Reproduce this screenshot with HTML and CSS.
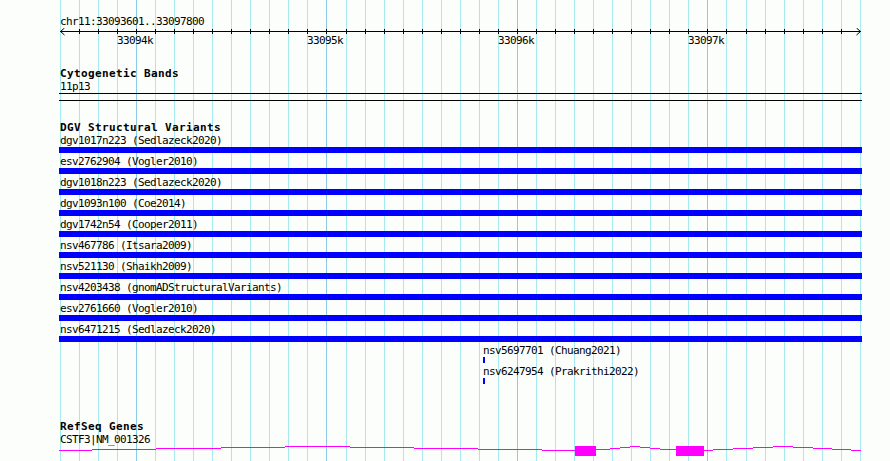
FILE: index.html
```html
<!DOCTYPE html>
<html lang="en">
<head>
  <meta charset="UTF-8">
  <title>chr11:33093601..33097800</title>
  <link rel="stylesheet" href="styles.css">
</head>
<body>
  <div class="browser">
    <!-- 100bp grid, heavier line every kb -->
    <svg class="grid" width="890" height="461" viewBox="0 0 890 461">
      <path class="grid-minor" d="M60.5 0V461M79.5 0V461M98.5 0V461M117.5 0V461M155.5 0V461M174.5 0V461M193.5 0V461M212.5 0V461M231.5 0V461M250.5 0V461M269.5 0V461M288.5 0V461M307.5 0V461M346.5 0V461M365.5 0V461M384.5 0V461M403.5 0V461M422.5 0V461M441.5 0V461M460.5 0V461M479.5 0V461M498.5 0V461M536.5 0V461M555.5 0V461M574.5 0V461M593.5 0V461M612.5 0V461M631.5 0V461M650.5 0V461M669.5 0V461M688.5 0V461M726.5 0V461M746.5 0V461M765.5 0V461M784.5 0V461M803.5 0V461M822.5 0V461M841.5 0V461M860.5 0V461"/>
      <path class="grid-major" d="M136.5 0V461M326.5 0V461M517.5 0V461M707.5 0V461"/>
    </svg>

    <div class="panel">
      <div class="ruler-title">chr11:33093601..33097800</div>
      <svg class="scale" width="802" height="20" viewBox="60 28 802 20">
        <path class="scale-line" d="M60 31.5H861"/>
        <polyline class="scale-line" points="64.5,28 60.5,31.5 64.5,35"/>
        <polyline class="scale-line" points="856.5,28 860.5,31.5 856.5,35"/>
        <path class="scale-line" d="M79.5 29V34M98.5 29V34M117.5 29V34M136.5 29V34M155.5 29V34M174.5 29V34M193.5 29V34M212.5 29V34M231.5 29V34M250.5 29V34M269.5 29V34M288.5 29V34M307.5 29V34M326.5 29V34M346.5 29V34M365.5 29V34M384.5 29V34M403.5 29V34M422.5 29V34M441.5 29V34M460.5 29V34M479.5 29V34M498.5 29V34M517.5 29V34M536.5 29V34M555.5 29V34M574.5 29V34M593.5 29V34M612.5 29V34M631.5 29V34M650.5 29V34M669.5 29V34M688.5 29V34M707.5 29V34M726.5 29V34M746.5 29V34M765.5 29V34M784.5 29V34M803.5 29V34M822.5 29V34M841.5 29V34"/>
        <text class="tick-label" x="117" y="44">33094k</text>
        <text class="tick-label" x="307" y="44">33095k</text>
        <text class="tick-label" x="498" y="44">33096k</text>
        <text class="tick-label" x="688" y="44">33097k</text>
      </svg>

      <section class="track track-cyto">
        <h2 class="track-title">Cytogenetic Bands</h2>
        <div class="label">11p13</div>
        <div class="band"></div>
      </section>

      <section class="track track-dgv">
        <h2 class="track-title">DGV Structural Variants</h2>
        <div class="feature">
          <div class="label">dgv1017n223 (Sedlazeck2020)</div>
          <div class="bar" style="margin-left:-1px;width:803px"></div>
        </div>
        <div class="feature">
          <div class="label">esv2762904 (Vogler2010)</div>
          <div class="bar" style="margin-left:-1px;width:803px"></div>
        </div>
        <div class="feature">
          <div class="label">dgv1018n223 (Sedlazeck2020)</div>
          <div class="bar" style="margin-left:-1px;width:803px"></div>
        </div>
        <div class="feature">
          <div class="label">dgv1093n100 (Coe2014)</div>
          <div class="bar" style="margin-left:-1px;width:803px"></div>
        </div>
        <div class="feature">
          <div class="label">dgv1742n54 (Cooper2011)</div>
          <div class="bar" style="margin-left:-1px;width:803px"></div>
        </div>
        <div class="feature">
          <div class="label">nsv467786 (Itsara2009)</div>
          <div class="bar" style="margin-left:-1px;width:803px"></div>
        </div>
        <div class="feature">
          <div class="label">nsv521130 (Shaikh2009)</div>
          <div class="bar" style="margin-left:-1px;width:803px"></div>
        </div>
        <div class="feature">
          <div class="label">nsv4203438 (gnomADStructuralVariants)</div>
          <div class="bar" style="margin-left:-1px;width:803px"></div>
        </div>
        <div class="feature">
          <div class="label">esv2761660 (Vogler2010)</div>
          <div class="bar" style="margin-left:-1px;width:803px"></div>
        </div>
        <div class="feature">
          <div class="label">nsv6471215 (Sedlazeck2020)</div>
          <div class="bar" style="margin-left:-1px;width:803px"></div>
        </div>
        <div class="feature" style="margin-left:423px">
          <div class="label">nsv5697701 (Chuang2021)</div>
          <div class="bar" style="width:2px"></div>
        </div>
        <div class="feature" style="margin-left:423px">
          <div class="label">nsv6247954 (Prakrithi2022)</div>
          <div class="bar" style="width:2px"></div>
        </div>
      </section>

      <section class="track track-genes">
        <h2 class="track-title">RefSeq Genes</h2>
        <div class="label">CSTF3|NM_001326</div>
        <svg class="gene" width="803" height="10" viewBox="59 446 803 10">
          <path class="intron" d="M59 450.5H92M92 449.5H156M156 448.5H221M221 447.5H285M285 446.5H350M350 447.5H414M414 448.5H478M478 449.5H542M542 450.5H575M596 449.5H610M610 448.5H620M620 447.5H630M630 446.5H640M640 447.5H650M650 448.5H660M660 449.5H676M704 450.5H713M713 449.5H733M733 448.5H753M753 447.5H773M773 446.5H793M793 447.5H813M813 448.5H832M832 449.5H851M851 450.5H861"/>
          <rect class="exon" x="575" y="446" width="21" height="10"/>
          <rect class="exon" x="676" y="446" width="28" height="10"/>
        </svg>
      </section>
    </div>
  </div>
</body>
</html>
```

FILE: styles.css
```css
* { box-sizing: border-box; }
body {
  margin: 0;
  background-color: #fbfefb;
  font-family: 'DejaVu Sans Mono', 'Liberation Mono', monospace;
  font-size: 11px;
  color: #000;
}
.browser {
  position: relative;
  width: 890px;
  height: 461px;
  overflow: hidden;
}
.grid {
  position: absolute;
  left: 0;
  top: 0;
  z-index: 0;
}
.grid-minor {
  stroke: #a6e9ef;
  stroke-width: 1;
}
.grid-major {
  stroke: #8ccbe6;
  stroke-width: 1;
}
.panel {
  position: relative;
  z-index: 1;
  margin-left: 60px;
  width: 802px;
  padding-top: 15px;
}
.ruler-title,
.label {
  height: 13px;
  line-height: 13px;
  letter-spacing: -0.62px;
  white-space: nowrap;
}
.scale {
  display: block;
}
.scale-line {
  fill: none;
  stroke: #000;
  stroke-width: 1;
}
.tick-label {
  font-family: 'DejaVu Sans Mono', 'Liberation Mono', monospace;
  font-size: 11px;
  letter-spacing: -0.62px;
  fill: #000;
}
.track-title {
  margin: 0;
  height: 12px;
  font-size: 11px;
  font-weight: bold;
  line-height: 12px;
  letter-spacing: 0.38px;
  white-space: nowrap;
}
.track-cyto { margin-top: 20px; }
.track-dgv { margin-top: 21px; }
.track-genes { margin-top: 35px; }
.band {
  margin-left: -1px;
  width: 803px;
  height: 8px;
  border-top: 1px solid #000;
  border-bottom: 1px solid #000;
}
.feature {
  padding-bottom: 2px;
}
.bar {
  height: 6px;
  background-color: #0000ff;
}
.gene {
  display: block;
  margin-left: -1px;
}
.intron {
  fill: none;
  stroke: #ff00ff;
  stroke-width: 1;
}
.exon {
  fill: #ff00ff;
}
```
